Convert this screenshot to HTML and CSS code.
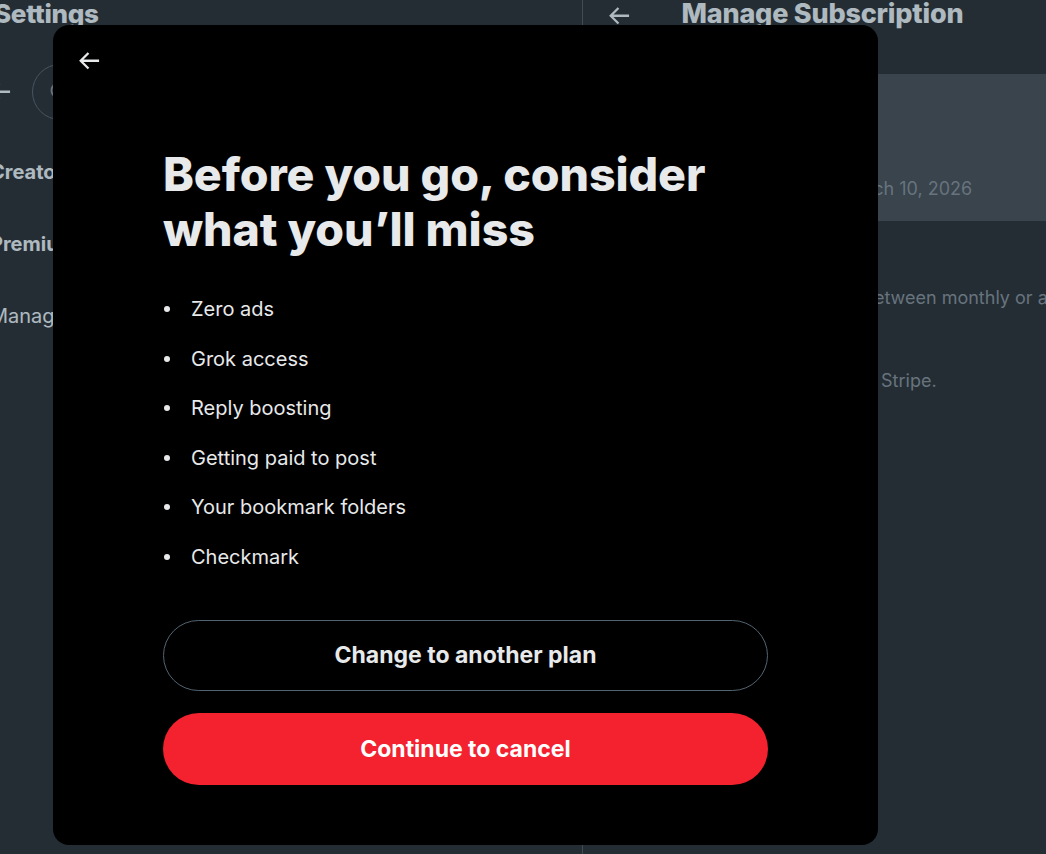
FILE: index.html
```html
<!DOCTYPE html>
<html lang="en">
<head>
<meta charset="utf-8">
<title>Manage Subscription</title>
<link rel="stylesheet" href="styles.css">
</head>
<body>
<div class="page">
  <section class="settings">
    <div class="settings-inner">
      <header class="col-head">
        <h2 class="col-title">Settings</h2>
      </header>
      <div class="search-row">
        <svg class="icon back-icon" viewBox="0 0 24 24"><path d="M7.414 13l5.043 5.043-1.414 1.414L3.586 12l7.457-7.457 1.414 1.414L7.414 11H21v2H7.414z"/></svg>
        <div class="search-pill">
          <svg class="search-icon" viewBox="0 0 24 24"><path d="M10.25 3.75c-3.59 0-6.5 2.910-6.5 6.5s2.91 6.5 6.5 6.5c1.795 0 3.419-.726 4.596-1.904 1.178-1.177 1.904-2.801 1.904-4.596 0-3.590-2.910-6.5-6.5-6.5zm-8.5 6.5c0-4.694 3.806-8.5 8.5-8.5s8.5 3.806 8.5 8.5c0 1.986-.682 3.815-1.824 5.262l4.781 4.781-1.414 1.414-4.781-4.781c-1.447 1.142-3.276 1.824-5.262 1.824-4.694 0-8.5-3.806-8.5-8.5z"/></svg>
          <span class="search-text">Search Settings</span>
        </div>
      </div>
      <nav class="menu">
        <div class="menu-item bold">Creator Subscriptions</div>
        <div class="menu-item bold">Premium</div>
        <div class="menu-item">Manage subscription</div>
      </nav>
    </div>
  </section>
  <section class="detail">
    <header class="detail-head">
      <svg class="icon back-icon" viewBox="0 0 24 24"><path d="M7.414 13l5.043 5.043-1.414 1.414L3.586 12l7.457-7.457 1.414 1.414L7.414 11H21v2H7.414z"/></svg>
      <h2 class="col-title">Manage Subscription</h2>
    </header>
    <div class="plan-card">
      <div class="plan-name">Premium</div>
      <div class="plan-date">Renews on March 10, 2026</div>
    </div>
    <p class="detail-line">You can switch between monthly or annual billing at any time.</p>
    <p class="detail-line second">Your subscription is billed through Stripe.</p>
  </section>
</div>

<div class="overlay"></div>

<div class="modal" role="dialog">
  <div class="modal-head">
    <button class="icon-btn" aria-label="Back">
      <svg class="icon modal-back" viewBox="0 0 24 24"><path d="M7.414 13l5.043 5.043-1.414 1.414L3.586 12l7.457-7.457 1.414 1.414L7.414 11H21v2H7.414z"/></svg>
    </button>
  </div>
  <div class="modal-body">
    <h1 class="modal-title">Before you go, consider what you’ll miss</h1>
    <ul class="perks">
      <li>Zero ads</li>
      <li>Grok access</li>
      <li>Reply boosting</li>
      <li>Getting paid to post</li>
      <li>Your bookmark folders</li>
      <li>Checkmark</li>
    </ul>
    <div class="actions">
      <button class="btn btn-outline">Change to another plan</button>
      <button class="btn btn-red">Continue to cancel</button>
    </div>
  </div>
</div>
</body>
</html>
```

FILE: styles.css
```css
* { box-sizing: border-box; }

html, body {
  margin: 0;
  padding: 0;
  height: 100%;
}

body {
  background: #000;
  color: #e7e9ea;
  font-family: Inter, "Noto Sans", "Liberation Sans", sans-serif;
  overflow: hidden;
  position: relative;
}

.page {
  display: flex;
  height: 854px;
  width: 1046px;
  overflow: hidden;
}

/* ---------- left settings column ---------- */
.settings {
  width: 583px;
  flex: none;
  border-right: 1px solid #2f3336;
  overflow: hidden;
}

.settings-inner {
  margin-left: -16px;
  width: 598px;
}

.col-head {
  height: 52px;
  padding-left: 10px;
}

.col-title {
  margin: -2px 0 0;
  font-size: 26px;
  line-height: 32px;
  font-weight: 800;
  letter-spacing: -0.3px;
  color: #e7e9ea;
  white-space: nowrap;
}

.search-row {
  display: flex;
  align-items: center;
  height: 84px;
}

.icon {
  fill: #e7e9ea;
  flex: none;
}

.back-icon {
  width: 27.5px;
  height: 27.5px;
}

.search-row .back-icon {
  margin-left: 2px;
  margin-right: 18px;
}

.search-pill {
  flex: 1;
  height: 56px;
  border: 1px solid #3b4148;
  border-radius: 28px;
  display: flex;
  align-items: center;
  padding-left: 16px;
  gap: 10px;
  margin-right: 20px;
}

.search-icon {
  width: 22px;
  height: 22px;
  fill: #71767b;
}

.search-text {
  color: #71767b;
  font-size: 20px;
}

.menu {
  display: flex;
  flex-direction: column;
  padding-top: 2px;
}

.menu-item {
  height: 72px;
  display: flex;
  align-items: center;
  padding-left: 6px;
  font-size: 20px;
  color: #e7e9ea;
  white-space: nowrap;
}

.menu-item.bold { font-weight: 700; }

/* ---------- right detail column ---------- */
.detail {
  flex: 1;
  min-width: 0;
  overflow: hidden;
}

.detail-head {
  height: 74px;
  display: flex;
  align-items: flex-start;
  padding-left: 22px;
  gap: 49px;
}

.detail-head .back-icon {
  margin-top: 2px;
}

.detail-head .col-title {
  font-size: 27px;
  letter-spacing: -0.2px;
}

.plan-card {
  height: 147px;
  background: #24272b;
  padding: 28px 0 0 159px;
  display: flex;
  flex-direction: column;
  gap: 51px;
}

.plan-name {
  font-size: 21px;
  font-weight: 700;
  color: #e7e9ea;
}

.plan-date {
  font-size: 18px;
  color: #71767b;
  white-space: nowrap;
}

.detail-line {
  margin: 0;
  padding-left: 146px;
  font-size: 18px;
  line-height: 24px;
  color: #71767b;
  white-space: nowrap;
}

.detail-line:first-of-type {
  margin-top: 65px;
}

.detail-line.second {
  margin-top: 59px;
  padding-left: 3px;
}

/* ---------- overlay + modal ---------- */
.overlay {
  position: absolute;
  inset: 0;
  background: rgba(91, 112, 131, 0.4);
}

.modal {
  position: absolute;
  left: 53px;
  top: 25px;
  width: 825px;
  height: 820px;
  background: #000;
  border-radius: 16px;
  display: flex;
  flex-direction: column;
}

.modal-head {
  height: 70px;
  padding: 18px 0 0 18px;
}

.icon-btn {
  width: 36px;
  height: 36px;
  border: none;
  background: transparent;
  padding: 0;
  display: flex;
  align-items: center;
  justify-content: center;
  cursor: pointer;
}

.modal-back {
  width: 27.5px;
  height: 27.5px;
}

.modal-body {
  padding: 0 110px;
  display: flex;
  flex-direction: column;
}

.modal-title {
  margin: 52px 0 0;
  font-size: 46.5px;
  line-height: 55px;
  font-weight: 800;
  letter-spacing: -0.1px;
  color: #e7e9ea;
}

.perks {
  list-style: none;
  margin: 40px 0 0;
  padding: 0;
  display: flex;
  flex-direction: column;
  gap: 25.6px;
}

.perks li {
  display: flex;
  align-items: center;
  gap: 21px;
  font-size: 20px;
  line-height: 24px;
  color: #e7e9ea;
}

.perks li::before {
  content: "";
  width: 6px;
  height: 6px;
  margin-left: 1px;
  border-radius: 50%;
  background: #e7e9ea;
  flex: none;
}

.actions {
  margin-top: 51px;
  display: flex;
  flex-direction: column;
  gap: 22px;
}

.btn {
  height: 71px;
  border-radius: 36px;
  font-family: Inter, "Noto Sans", "Liberation Sans", sans-serif;
  font-size: 23px;
  font-weight: 700;
  cursor: pointer;
}

.btn-outline {
  background: transparent;
  border: 1px solid #536471;
  color: #e7e9ea;
}

.btn-red {
  height: 72px;
  background: #f4212e;
  border: none;
  color: #fff;
}
```
